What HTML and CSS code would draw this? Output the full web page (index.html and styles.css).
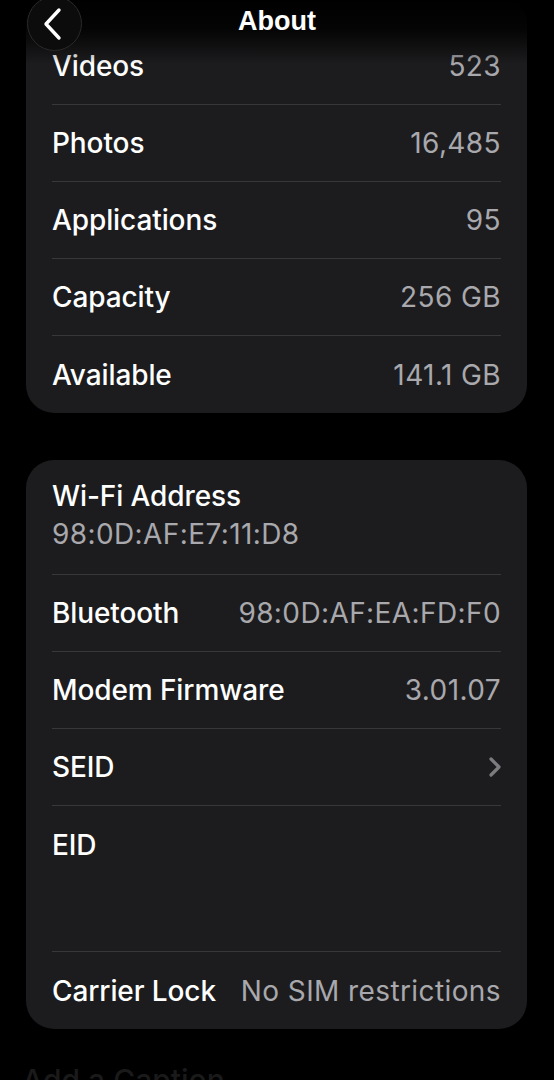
FILE: index.html
```html
<!DOCTYPE html>
<html>
<head>
<meta charset="utf-8">
<link rel="stylesheet" href="styles.css">
</head>
<body>
<div class="screen">
  <div class="content">
    <section class="card card-top">
      <div class="row"><span class="label">Videos</span><span class="value">523</span></div>
      <div class="row"><span class="label">Photos</span><span class="value">16,485</span></div>
      <div class="row"><span class="label">Applications</span><span class="value">95</span></div>
      <div class="row"><span class="label">Capacity</span><span class="value">256 GB</span></div>
      <div class="row last"><span class="label">Available</span><span class="value">141.1 GB</span></div>
    </section>

    <section class="card card-net">
      <div class="row stacked"><span class="label">Wi-Fi Address</span><span class="value">98:0D:AF:E7:11:D8</span></div>
      <div class="row"><span class="label">Bluetooth</span><span class="value">98:0D:AF:EA:FD:F0</span></div>
      <div class="row"><span class="label">Modem Firmware</span><span class="value">3.01.07</span></div>
      <div class="row"><span class="label">SEID</span>
        <svg class="chev" width="14" height="22" viewBox="0 0 14 22"><path d="M3 3 L11 11 L3 19" fill="none" stroke="#7b7b80" stroke-width="3.2" stroke-linecap="round" stroke-linejoin="round"/></svg>
      </div>
      <div class="row eid"><span class="label">EID</span></div>
      <div class="row last"><span class="label">Carrier Lock</span><span class="value">No SIM restrictions</span></div>
    </section>

    <div class="caption">Add a Caption</div>
  </div>

  <header class="nav">
    <button class="back" aria-label="Back">
      <svg width="22" height="34" viewBox="0 0 22 34"><path d="M17 3 L4 17 L17 31" fill="none" stroke="#ffffff" stroke-width="3.4" stroke-linecap="round" stroke-linejoin="round"/></svg>
    </button>
    <h1 class="title">About</h1>
  </header>
</div>
</body>
</html>
```

FILE: styles.css
```css
html, body {
  margin: 0;
  padding: 0;
  background: #000;
}
body {
  width: 554px;
  height: 1080px;
  overflow: hidden;
  font-family: Inter, "Liberation Sans", Arial, sans-serif;
  -webkit-font-smoothing: antialiased;
}
.screen {
  position: relative;
  width: 554px;
  height: 1080px;
  overflow: hidden;
}
.content {
  display: flex;
  flex-direction: column;
  padding: 0 27px 0 26px;
  margin-top: -4px;
}
.card {
  background: #1c1c1e;
  border-radius: 28px;
  padding: 0 26px;
}
.card-top {
  padding-top: 32px;
}
.card-net {
  margin-top: 47px;
}
.row {
  display: flex;
  align-items: center;
  justify-content: space-between;
  height: 77px;
  box-sizing: border-box;
  border-bottom: 1px solid #38383a;
}
.row.last {
  border-bottom: none;
}
.label {
  color: #ffffff;
  font-size: 28px;
  font-weight: 500;
  letter-spacing: -0.1px;
}
.value {
  color: #a8a8ad;
  font-size: 28px;
  font-weight: 400;
  letter-spacing: 0.4px;
}
.row.stacked {
  flex-direction: column;
  align-items: flex-start;
  justify-content: flex-start;
  height: 115px;
  padding-top: 19px;
  gap: 4px;
}
.row.eid {
  align-items: flex-start;
  height: 146px;
  padding-top: 22px;
}
.chev {
  margin-right: -1px;
}
.caption {
  margin-top: 33px;
  margin-left: -4px;
  color: #1a1a1a;
  font-size: 30px;
  font-weight: 500;
}
.nav {
  position: absolute;
  top: 0;
  left: 0;
  right: 0;
  height: 64px;
  background: linear-gradient(to bottom, #000 0%, rgba(0,0,0,0.85) 45%, rgba(0,0,0,0) 100%);
  display: flex;
  align-items: flex-start;
  justify-content: center;
}
.back {
  position: absolute;
  left: 27px;
  top: -4px;
  width: 55px;
  height: 55px;
  border-radius: 50%;
  background: #0c0c0c;
  border: 1px solid #2a2a2a;
  display: flex;
  align-items: center;
  justify-content: center;
  padding: 0 4px 0 0;
  box-sizing: border-box;
}
.title {
  margin: 3px 0 0 0;
  color: #fff;
  font-family: "Liberation Sans", Arial, sans-serif;
  font-weight: 700;
  font-size: 27px;
  line-height: 36px;
}
```
